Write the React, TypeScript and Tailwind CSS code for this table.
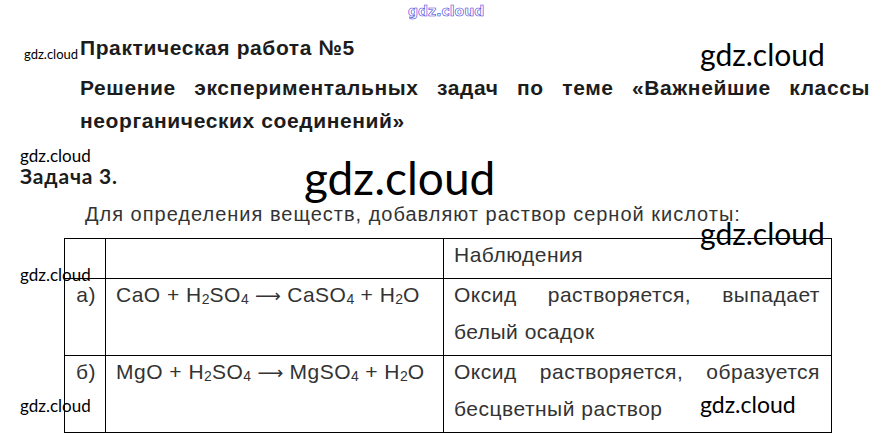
import React from "react";

const arial = "font-['Liberation_Sans',Arial,sans-serif]";
const lato = "font-['Lato','Open_Sans',sans-serif]";

const Mark = ({ className }: { className: string }) => (
  <span className={`absolute ${lato} text-black leading-none whitespace-nowrap ${className}`}>gdz.cloud</span>
);

const Sub = ({ children }: { children: React.ReactNode }) => (
  <sub className="text-[14px] bottom-[-2px] tracking-normal">{children}</sub>
);

const Arrow = () => (
  <span className="font-['DejaVu_Sans',sans-serif] text-[18px] tracking-normal">⟶</span>
);

const Cell = ({ children, className = "" }: { children?: React.ReactNode; className?: string }) => (
  <td className={`border border-black align-top ${className}`}>
    <div className="-mt-[3px]">{children}</div>
  </td>
);

const App = () => {
  return (
    <div className="relative w-[891px] h-[441px] bg-white overflow-hidden flex flex-col pt-[36px]">
      <div className={`flex flex-col gap-[11px] pl-[80px] pr-[21px] ${arial} font-bold text-[21px] tracking-[0.6px] text-[#1c1c1c]`}>
        <h1 className="leading-[24px]">Практическая работа №5</h1>
        <p className="leading-[33px] text-justify">
          Решение экспериментальных задач по теме «Важнейшие классы неорганических соединений»
        </p>
      </div>

      <div className="flex flex-col pt-[27px] gap-[14px]">
        <h2 className={`pl-[20px] ${lato} font-bold text-[21px] leading-[24px] tracking-[0.8px] text-[#1c1c1c]`}>Задача 3.</h2>
        <p className={`pl-[85px] ${arial} text-[20px] leading-[24px] tracking-[1px] text-[#333]`}>
          Для определения веществ, добавляют раствор серной кислоты:
        </p>
      </div>

      <div className="flex pt-[12px] pl-[64px]">
        <table className={`w-[767px] border-collapse table-fixed ${arial} text-[21px] leading-[37px] tracking-[0.5px] text-[#333]`}>
          <colgroup>
            <col className="w-[41px]" />
            <col className="w-[338px]" />
            <col className="w-[388px]" />
          </colgroup>
          <tbody>
            <tr className="h-[40px]">
              <Cell />
              <Cell />
              <Cell className="pl-[10px] pr-[11px]">Наблюдения</Cell>
            </tr>
            <tr className="h-[77px]">
              <Cell className="text-right pr-[9px]">а)</Cell>
              <Cell className="pl-[10px] whitespace-nowrap">
                CaO + H<Sub>2</Sub>SO<Sub>4</Sub> <Arrow /> CaSO<Sub>4</Sub> + H<Sub>2</Sub>O
              </Cell>
              <Cell className="pl-[10px] pr-[11px] text-justify">Оксид растворяется, выпадает белый осадок</Cell>
            </tr>
            <tr className="h-[77px]">
              <Cell className="text-right pr-[9px]">б)</Cell>
              <Cell className="pl-[10px] whitespace-nowrap">
                MgO + H<Sub>2</Sub>SO<Sub>4</Sub> <Arrow /> MgSO<Sub>4</Sub> + H<Sub>2</Sub>O
              </Cell>
              <Cell className="pl-[10px] pr-[11px] text-justify">Оксид растворяется, образуется бесцветный раствор</Cell>
            </tr>
          </tbody>
        </table>
      </div>

      {/* watermarks over the page */}
      <span className="absolute left-[408px] top-[1px] font-['DejaVu_Sans',sans-serif] font-bold text-[14px] leading-[20px] text-white [-webkit-text-stroke:0.6px_#3c3cd8]">
        gdz.cloud
      </span>
      <Mark className="left-[24px] top-[48px] text-[13px]" />
      <Mark className="left-[700px] top-[39px] text-[30px]" />
      <Mark className="left-[20px] top-[147px] text-[17px]" />
      <Mark className="left-[304px] top-[155px] text-[46px]" />
      <Mark className="left-[700px] top-[218px] text-[30px]" />
      <Mark className="left-[20px] top-[266px] text-[17px]" />
      <Mark className="left-[20px] top-[397px] text-[17px]" />
      <Mark className="left-[700px] top-[393px] text-[23px]" />
    </div>
  );
};

export default App;
